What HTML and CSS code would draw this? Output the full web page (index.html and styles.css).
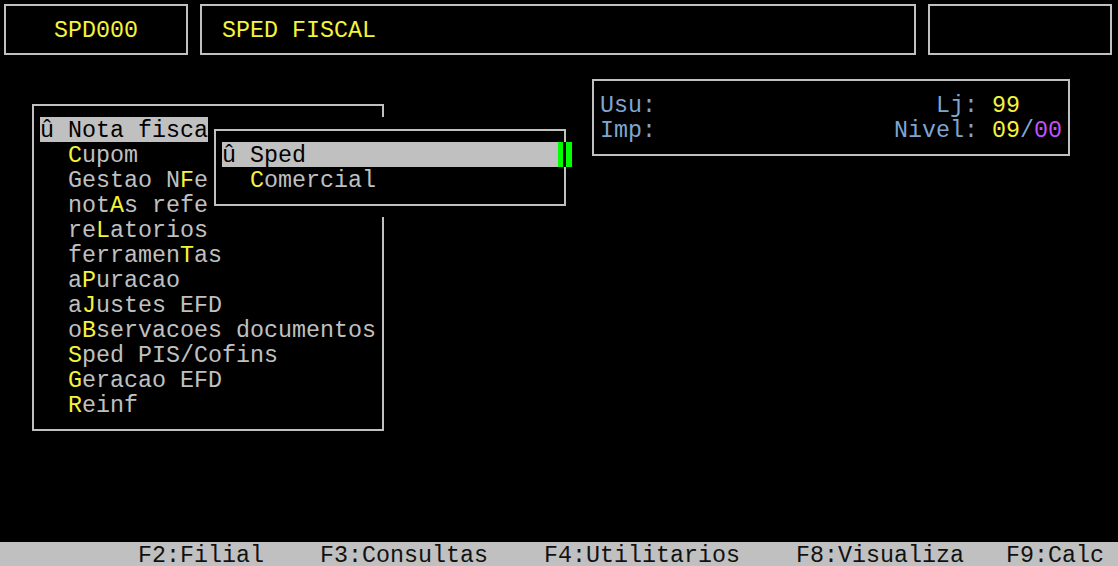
FILE: index.html
```html
<!DOCTYPE html>
<html lang="pt">
<head>
<meta charset="utf-8">
<title>SPED FISCAL</title>
<link rel="stylesheet" href="styles.css">
</head>
<body>
<div class="screen">
  <div class="win win-code"><div class="line">   <span class="y">SPD000</span></div></div>
  <div class="win win-title"><div class="line"> <span class="y">SPED FISCAL</span></div></div>
  <div class="win win-blank"></div>

  <div class="win win-info">
    <div class="line"><span class="lbl">Usu:</span>                    <span class="lbl">Lj: </span><span class="y">99</span></div>
    <div class="line"><span class="lbl">Imp:</span>                 <span class="lbl">Nivel: </span><span class="y">09</span><span class="lbl">/</span><span class="m">00</span></div>
  </div>

  <div class="win win-menu">
    <div class="line sel">û Nota fiscal</div>
    <div class="line">  <span class="y">C</span>upom</div>
    <div class="line">  Gestao N<span class="y">F</span>e</div>
    <div class="line">  not<span class="y">A</span>s referenciadas</div>
    <div class="line">  re<span class="y">L</span>atorios</div>
    <div class="line">  ferramen<span class="y">T</span>as</div>
    <div class="line">  a<span class="y">P</span>uracao</div>
    <div class="line">  a<span class="y">J</span>ustes EFD</div>
    <div class="line">  o<span class="y">B</span>servacoes documentos</div>
    <div class="line">  <span class="y">S</span>ped PIS/Cofins</div>
    <div class="line">  <span class="y">G</span>eracao EFD</div>
    <div class="line">  <span class="y">R</span>einf</div>
  </div>

  <div class="win win-sub">
    <div class="line sel-row"><span class="sel-text">û Sped</span><span class="cursor"></span></div>
    <div class="line">  <span class="y">C</span>omercial</div>
  </div>

  <div class="fkeys line">          F2:Filial    F3:Consultas    F4:Utilitarios    F8:Visualiza   F9:Calc</div>
</div>
</body>
</html>
```

FILE: styles.css
```css
html, body {
  margin: 0;
  padding: 0;
  background: #000;
  overflow: hidden;
  width: 1118px;
  height: 566px;
}

.screen {
  display: grid;
  grid-template-columns: repeat(80, 14px);
  grid-template-rows: repeat(23, 25px);
  margin: -8px 0 0 -2px;
  font-family: "Liberation Mono", "DejaVu Sans Mono", monospace;
  font-size: 23.333px;
  color: #c0c0c0;
}

.line {
  box-sizing: border-box;
  height: 25px;
  padding-top: 2px;
  line-height: 25px;
  white-space: pre;
}

.y { color: #f4f438; }
.lbl { color: #7ea6d0; }
.m { color: #c050ff; }

.win {
  position: relative;
  background: #000;
  padding: 25px 14px;
  box-sizing: border-box;
  overflow: hidden;
}

.win::before {
  content: "";
  position: absolute;
  top: 12px;
  left: 6px;
  right: 6px;
  bottom: 11px;
  border: 2px solid #c0c0c0;
  pointer-events: none;
}

.win-code  { grid-column: 1 / 15;  grid-row: 1 / 4; }
.win-title { grid-column: 15 / 67; grid-row: 1 / 4; }
.win-blank { grid-column: 67 / 81; grid-row: 1 / 4; }
.win-info  { grid-column: 43 / 78; grid-row: 4 / 8; }
.win-menu  { grid-column: 3 / 29;  grid-row: 5 / 19; }
.win-sub   { grid-column: 16 / 42; grid-row: 6 / 10; overflow: visible; }

.win-code::before,
.win-title::before,
.win-blank::before {
  bottom: 12px;
}

.sel {
  background: #c0c0c0;
  color: #000;
  overflow: hidden;
}

.sel-row {
  display: flex;
  margin-right: -14px;
  padding-top: 0;
}

.sel-text {
  flex: 1;
  padding-top: 2px;
  background: #c0c0c0;
  color: #000;
}

.cursor {
  position: relative;
  z-index: 1;
  width: 14px;
  background: #00ff00;
}

.cursor::after {
  content: "";
  position: absolute;
  top: 0;
  bottom: 0;
  left: 5px;
  width: 3px;
  background: #000;
}

.fkeys {
  grid-column: 1 / 81;
  grid-row: 23 / 24;
  height: 24px;
  padding-top: 5px;
  line-height: 19px;
  background: #c0c0c0;
  color: #111;
}
```
